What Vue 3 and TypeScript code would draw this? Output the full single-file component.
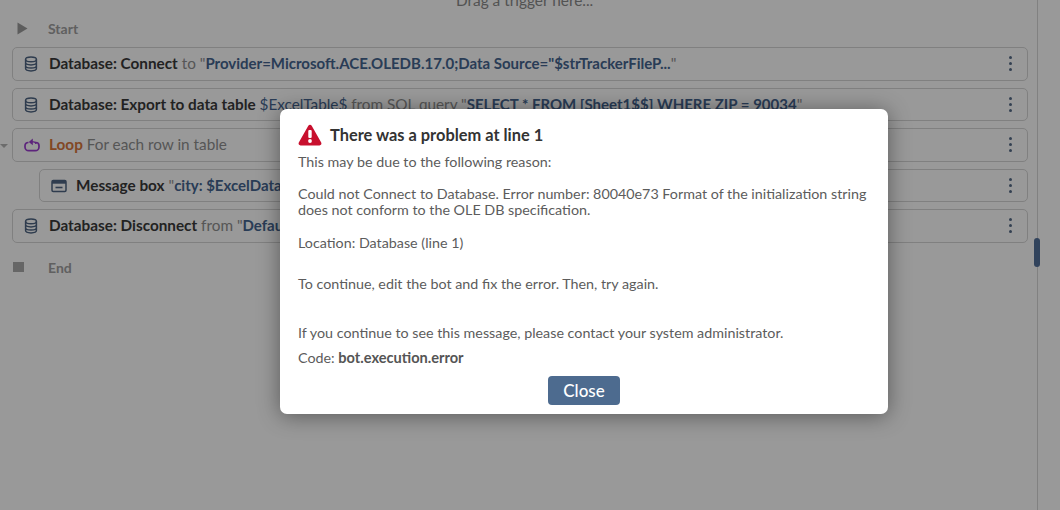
<script setup lang="ts">
interface Marker { label: string }
const start: Marker = { label: 'Start' }
const end: Marker = { label: 'End' }
</script>

<template>
  <div class="page">
    <div class="flow">
      <div class="drag">Drag a trigger here...</div>
      <div class="marker start-marker">
        <svg class="m-icon" viewBox="0 0 11 13" width="11" height="13"><path d="M0.500 0.500l10 6-10 6z" fill="#9c9c9c" /></svg>
        <span>{{ start.label }}</span>
      </div>
      <div class="row tall">
        <svg class="db" viewBox="0 0 14 16" width="14" height="16"><g fill="none" stroke="#4f6583" stroke-width="1.5"><ellipse cx="7" cy="3.4" rx="5.4" ry="2.3" /><path d="M1.6 3.4v9.2c0 1.3 2.4 2.3 5.4 2.3s5.4-1 5.4-2.3V3.4M1.6 6.6c0 1.3 2.4 2.3 5.4 2.3s5.4-1 5.4-2.3M1.6 9.7c0 1.3 2.4 2.3 5.4 2.3s5.4-1 5.4-2.3" /></g></svg>
        <span class="txt"><b>Database: Connect</b> to "<em>Provider=Microsoft.ACE.OLEDB.17.0;Data Source="$strTrackerFileP...</em>"</span>
        <span class="more"><i></i><i></i><i></i></span>
      </div>
      <div class="row short">
        <svg class="db" viewBox="0 0 14 16" width="14" height="16"><g fill="none" stroke="#4f6583" stroke-width="1.5"><ellipse cx="7" cy="3.4" rx="5.4" ry="2.3" /><path d="M1.6 3.4v9.2c0 1.3 2.4 2.3 5.4 2.3s5.4-1 5.4-2.3V3.4M1.6 6.6c0 1.3 2.4 2.3 5.4 2.3s5.4-1 5.4-2.3M1.6 9.7c0 1.3 2.4 2.3 5.4 2.3s5.4-1 5.4-2.3" /></g></svg>
        <span class="txt"><b>Database: Export to data table</b> <u>$ExcelTable$</u> from SQL query "<em>SELECT * FROM [Sheet1$$] WHERE ZIP = 90034</em>"</span>
        <span class="more"><i></i><i></i><i></i></span>
      </div>
      <div class="row tall">
        <span class="caret"></span>
        <svg class="loop-icon" viewBox="0 0 16 14" width="16" height="14"><path d="M4.500 4.500H4.200A3.200 3.200 0 0 0 1 7.700v1.300A3.700 3.700 0 0 0 4.700 12.700h6.600A3.700 3.700 0 0 0 15 9V7.700A3.200 3.200 0 0 0 11.800 4.500h-.8" fill="none" stroke="#9b3ccf" stroke-width="1.700" /><path d="M8.800 0.400L4.800 3.900l4 3.400z" fill="#9b3ccf" /><path d="M8 3.900h1.500A2.500 2.500 0 0 1 12 6" fill="none" stroke="#9b3ccf" stroke-width="1.400" /></svg>
        <span class="txt"><b class="orange">Loop</b> For each row in table</span>
        <span class="more"><i></i><i></i><i></i></span>
      </div>
      <div class="row short nested">
        <svg class="msg" viewBox="0 0 16 14" width="16" height="14"><rect x="1" y="1.500" width="14" height="11" rx="1.200" fill="none" stroke="#4f6583" stroke-width="1.500" /><rect x="1" y="1.500" width="14" height="3.200" fill="#4f6583" /><path d="M4.500 8.500h7" fill="none" stroke="#4f6583" stroke-width="1.600" /></svg>
        <span class="txt"><b>Message box</b> "<em>city: $ExcelData$</em>"</span>
        <span class="more"><i></i><i></i><i></i></span>
      </div>
      <div class="row tall">
        <svg class="db" viewBox="0 0 14 16" width="14" height="16"><g fill="none" stroke="#4f6583" stroke-width="1.5"><ellipse cx="7" cy="3.4" rx="5.4" ry="2.3" /><path d="M1.6 3.4v9.2c0 1.3 2.4 2.3 5.4 2.3s5.4-1 5.4-2.3V3.4M1.6 6.6c0 1.3 2.4 2.3 5.4 2.3s5.4-1 5.4-2.3M1.6 9.7c0 1.3 2.4 2.3 5.4 2.3s5.4-1 5.4-2.3" /></g></svg>
        <span class="txt"><b>Database: Disconnect</b> from "<em>Default</em>"</span>
        <span class="more"><i></i><i></i><i></i></span>
      </div>
      <div class="marker end-marker">
        <span class="square"></span>
        <span>{{ end.label }}</span>
      </div>
    </div>
    <div class="rail"><span class="thumb"></span></div>

    <div class="overlay">
      <div class="modal">
        <div class="title">
          <svg viewBox="0 0 24 22" width="24" height="22"><path d="M12 0.8c.7 0 1.3.4 1.7 1l9.5 16.8c.7 1.3-.2 2.8-1.7 2.8h-19c-1.5 0-2.4-1.5-1.7-2.8L10.300 1.800c.4-.6 1-1 1.700-1z" fill="#c8102e" /><rect x="10.300" y="6" width="3.400" height="8" rx="1" fill="#fff" /><circle cx="12" cy="17" r="1.900" fill="#fff" /></svg>
          <span>There was a problem at line 1</span>
        </div>
        <p class="reason">This may be due to the following reason:</p>
        <p class="err">Could not Connect to Database. Error number: 80040e73 Format of the initialization string<br />does not conform to the OLE DB specification.</p>
        <p class="loc">Location: Database (line 1)</p>
        <p class="cont">To continue, edit the bot and fix the error. Then, try again.</p>
        <p class="admin">If you continue to see this message, please contact your system administrator.</p>
        <p class="code">Code: <b>bot.execution.error</b></p>
        <div class="actions"><button type="button" class="close">Close</button></div>
      </div>
    </div>
  </div>
</template>

<style scoped>
.page {
  position: relative;
  width: 1060px;
  height: 510px;
  overflow: hidden;
  background: #fff;
  font-family: Lato, "Open Sans", sans-serif;
  font-size: 15.3px;
  color: #3a3a3a;
  display: flex;
}
.flow {
  width: 1028px;
  padding-left: 12px;
  box-sizing: border-box;
  display: flex;
  flex-direction: column;
}
.drag {
  height: 6px;
  line-height: 0;
  padding-left: 444px;
  font-size: 15.4px;
  color: #8a8a8a;
  white-space: nowrap;
}
.marker {
  display: flex;
  align-items: center;
  box-sizing: border-box;
  color: #a0a0a0;
  font-size: 14px;
  font-weight: 700;
}
.start-marker {
  height: 41px;
  padding-top: 4px;
}
.start-marker .m-icon {
  margin-left: 5px;
}
.start-marker span:last-child {
  margin-left: 20px;
}
.end-marker {
  height: 34px;
}
.end-marker span:last-child {
  margin-left: 24px;
}
.square {
  width: 11px;
  height: 10px;
  margin-left: 1px;
  background: #aaa;
}
.row {
  position: relative;
  display: flex;
  align-items: center;
  box-sizing: border-box;
  margin-bottom: 7px;
  padding: 0 0 2px 11px;
  border: 1px solid #d6d6d6;
  border-radius: 5px;
  white-space: nowrap;
  color: #8f8f8f;
}
.row svg { margin-top: 2px; }
.tall { height: 34px; }
.short { height: 33px; }
.nested { margin-left: 27px; }
.db { flex: none; margin-right: 11px; }
.msg { flex: none; margin-right: 9px; }
.loop-icon { flex: none; margin-right: 9px; }
.txt b { font-weight: 700; color: #3a3a3a; }
.txt b.orange { color: #d9773c; }
.txt em, .txt u { font-style: normal; text-decoration: none; color: #45658f; }
.txt em { font-weight: 700; font-size: 15px; }
.caret {
  position: absolute;
  left: -13px;
  top: 15px;
  width: 0;
  height: 0;
  border: 4px solid transparent;
  border-top: 4px solid #b4b4b4;
}
.more {
  position: absolute;
  right: 15px;
  top: 8px;
  display: flex;
  flex-direction: column;
  gap: 3px;
}
.more i {
  width: 3px;
  height: 3px;
  border-radius: 50%;
  background: #566c88;
}
.rail {
  position: relative;
  margin-left: 9px;
  width: 1px;
  height: 510px;
  background: #d8d8d8;
}
.thumb {
  position: absolute;
  left: -3px;
  top: 238px;
  width: 6px;
  height: 29px;
  border-radius: 3px;
  background: #52709a;
}
.overlay {
  position: absolute;
  inset: 0;
  background: rgba(0, 0, 0, 0.4);
  padding: 109px 0 0 280px;
  box-sizing: border-box;
}
.modal {
  width: 608px;
  height: 305px;
  box-sizing: border-box;
  padding: 14px 18px 0;
  background: #fff;
  border-radius: 7px;
  box-shadow: 0 2px 22px rgba(0, 0, 0, 0.42);
  color: #5c5c5c;
  font-size: 14.3px;
  line-height: 16px;
}
.modal p { margin: 0; white-space: nowrap; }
.title {
  display: flex;
  align-items: center;
  gap: 8px;
  height: 24px;
  font-size: 16.400px;
  font-weight: 700;
  color: #333;
}
.modal .reason { margin-top: 7px; }
.modal .err { margin-top: 16px; }
.modal .loc { margin-top: 17px; }
.modal .cont { margin-top: 25px; }
.modal .admin { margin-top: 33px; }
.modal .code { margin-top: 9px; }
.code b { font-weight: 700; color: #555; font-size: 14.6px; }
.actions { display: flex; justify-content: center; margin-top: 10px; }
.close {
  width: 72px;
  height: 29px;
  border: none;
  border-radius: 4px;
  background: #4d6b8f;
  color: #fff;
  font-family: inherit;
  font-size: 17px;
  font-weight: 500;
  padding: 0;
}
</style>
